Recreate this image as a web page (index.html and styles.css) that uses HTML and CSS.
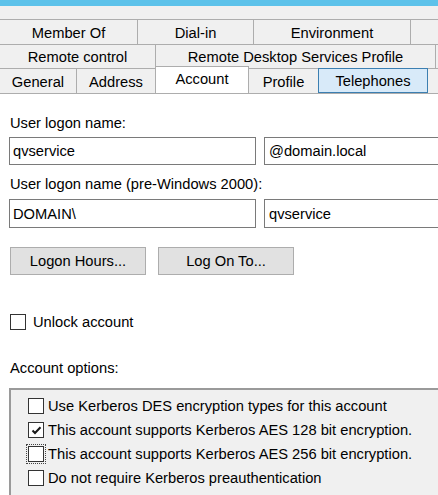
FILE: index.html
```html
<!DOCTYPE html>
<html>
<head>
<meta charset="utf-8">
<link rel="stylesheet" href="styles.css">
</head>
<body>
<div class="titlebar"></div>
<div class="gap-top"></div>
<div class="tabs">
  <div class="row r1">
    <div class="tab" style="width:138px">Member Of</div>
    <div class="tab" style="width:116px">Dial-in</div>
    <div class="tab" style="width:157px">Environment</div>
    <div class="tab" style="width:60px"></div>
  </div>
  <div class="row r2">
    <div class="tab" style="width:156px">Remote control</div>
    <div class="tab" style="width:280px">Remote Desktop Services Profile</div>
    <div class="tab" style="width:60px"></div>
  </div>
  <div class="row r3">
    <div class="tab" style="width:77px">General</div>
    <div class="tab" style="width:79px">Address</div>
    <div class="tab selected" style="width:93px">Account</div>
    <div class="tab" style="width:70px">Profile</div>
    <div class="tab hover" style="width:109px">Telephones</div>
    <div class="tab" style="width:60px"></div>
  </div>
</div>
<div class="page">
  <div class="label l1">User logon name:</div>
  <div class="field-row fr1">
    <div class="input wide">qvservice</div>
    <div class="input rest">@domain.local</div>
  </div>
  <div class="label l2">User logon name (pre-Windows 2000):</div>
  <div class="field-row fr2">
    <div class="input wide">DOMAIN\</div>
    <div class="input rest">qvservice</div>
  </div>
  <div class="buttons">
    <div class="btn">Logon Hours...</div>
    <div class="btn">Log On To...</div>
  </div>
  <div class="check-row unlock">
    <span class="cb"></span><span>Unlock account</span>
  </div>
  <div class="label l3">Account options:</div>
  <div class="options">
    <div class="opt"><span class="cb"></span><span>Use Kerberos DES encryption types for this account</span></div>
    <div class="opt"><span class="cb checked"><svg width="13" height="13" viewBox="0 0 13 13"><path d="M2.5 6.5 L5 9 L10.5 3.2" fill="none" stroke="#1a1a1a" stroke-width="2"/></svg></span><span>This account supports Kerberos AES 128 bit encryption.</span></div>
    <div class="opt"><span class="cb focus"></span><span>This account supports Kerberos AES 256 bit encryption.</span></div>
    <div class="opt"><span class="cb"></span><span>Do not require Kerberos preauthentication</span></div>
  </div>
</div>
</body>
</html>
```

FILE: styles.css
```css
html, body {
  margin: 0;
  padding: 0;
}
body {
  width: 438px;
  height: 495px;
  overflow: hidden;
  background: #f0f0f0;
  font-family: "Liberation Sans", Arial, sans-serif;
  font-size: 14.7px;
  color: #000;
}
.titlebar {
  height: 6px;
  background: #5dc2ea;
}
.gap-top {
  height: 13px;
}
.tabs {
  width: 438px;
  overflow: hidden;
}
.row {
  display: flex;
  white-space: nowrap;
}
.r1 { height: 25px; }
.r2 { height: 24px; }
.r3 { height: 25px; }
.tab {
  box-sizing: border-box;
  flex: none;
  height: 100%;
  border-top: 1px solid #adadad;
  border-right: 1px solid #adadad;
  background: #f0f0f0;
  display: flex;
  align-items: center;
  justify-content: center;
  padding-top: 1px;
}
.tab.hover {
  background: #d8eaf9;
  border: 1px solid #3c7fb1;
  margin-left: -1px;
  width: 110px !important;
}
.tab.selected {
  position: relative;
  z-index: 2;
  background: #fff;
  height: 28px;
  margin-top: -2px;
  margin-left: -1px;
  width: 94px !important;
  border-left: 1px solid #adadad;
  align-items: flex-start;
  padding-top: 4px;
}
.page {
  background: #fff;
  border-top: 1px solid #adadad;
  height: 402px;
  width: 438px;
  overflow: hidden;
  padding: 21px 0 0 9px;
  box-sizing: border-box;
}
.label {
  height: 16px;
  line-height: 16px;
  padding-left: 1px;
}
.l2 { margin-top: 11px; }
.l3 { margin-top: 30px; }
.field-row {
  display: flex;
  gap: 8px;
}
.fr1 { margin-top: 6px; height: 28px; }
.fr2 { margin-top: 7px; height: 29px; }
.input {
  box-sizing: border-box;
  border: 1px solid #7a7a7a;
  background: #fff;
  display: flex;
  align-items: center;
  padding-left: 3px;
  flex: none;
}
.input.wide { width: 247px; }
.input.rest { width: 200px; padding-left: 4px; }
.buttons {
  display: flex;
  gap: 12px;
  margin-top: 19px;
  padding-left: 1px;
}
.btn {
  box-sizing: border-box;
  width: 136px;
  height: 28px;
  border: 1px solid #adadad;
  background: #e1e1e1;
  display: flex;
  align-items: center;
  justify-content: center;
}
.check-row {
  display: flex;
  align-items: center;
  gap: 7px;
  height: 16px;
}
.unlock {
  margin-top: 39px;
  padding-left: 1px;
}
.cb {
  box-sizing: border-box;
  width: 16px;
  height: 16px;
  border: 1px solid #333;
  background: #fff;
  flex: none;
  display: flex;
  align-items: center;
  justify-content: center;
}
.cb.focus {
  outline: 1px dotted #444;
  outline-offset: 1px;
}
.options {
  margin-top: 12px;
  box-sizing: border-box;
  width: 440px;
  height: 120px;
  border-top: 2px solid #9a9a9a;
  border-left: 2px solid #9a9a9a;
  background: #f0f0f0;
  padding: 4px 0 0 17px;
}
.opt {
  display: flex;
  align-items: center;
  gap: 4px;
  height: 24px;
  white-space: nowrap;
}
```
